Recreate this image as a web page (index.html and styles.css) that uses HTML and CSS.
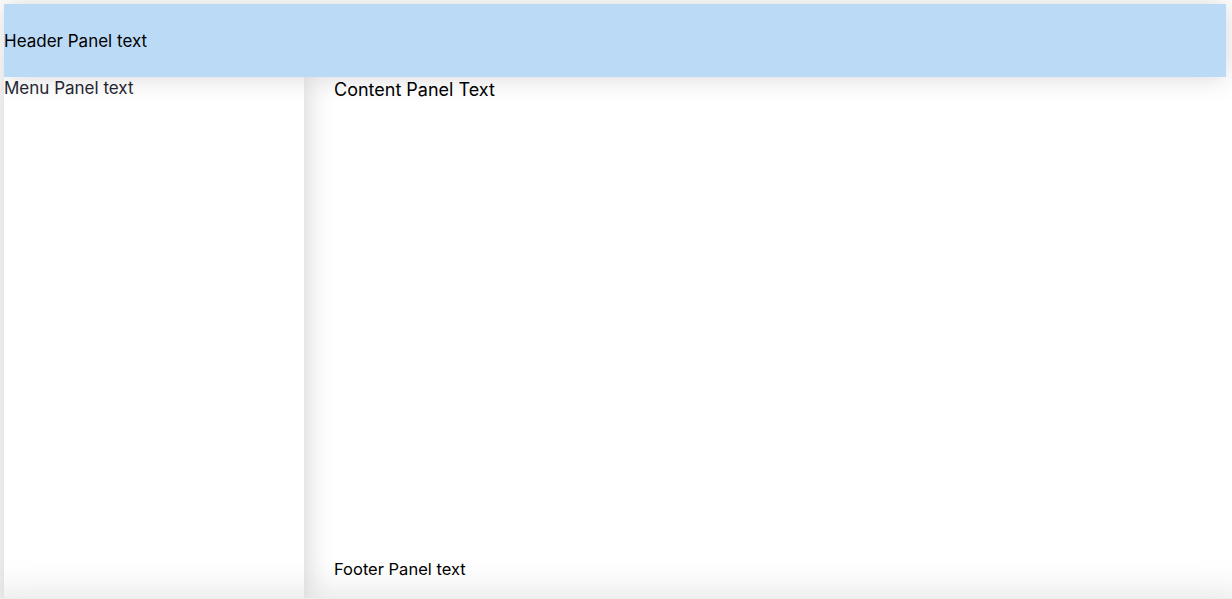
FILE: index.html
```html
<!DOCTYPE html>
<html>
<head>
<meta charset="utf-8">
<link rel="stylesheet" href="styles.css">
</head>
<body>
<div class="page">
  <header class="header">Header Panel text</header>
  <div class="main">
    <nav class="menu">Menu Panel text</nav>
    <section class="content">
      <div class="content-text">Content Panel Text</div>
      <div class="footer">Footer Panel text</div>
    </section>
  </div>
  <div class="below"></div>
</div>
</body>
</html>
```
FILE: styles.css
```css
html, body {
  margin: 0;
  padding: 0;
  height: 100%;
  overflow: hidden;
  background: #ffffff;
}
body {
  font-family: Inter, "Noto Sans", sans-serif;
  color: #000;
}
.page {
  padding: 4px 6px 0 4px;
  display: flex;
  flex-direction: column;
}
.header {
  position: relative;
  z-index: 2;
  height: 73px;
  flex: none;
  background: #bbdaf5;
  display: flex;
  align-items: center;
  font-size: 17px;
  box-shadow: 0 0 28px rgba(0, 0, 0, 0.16);
}
.main {
  display: flex;
  height: 521px;
  flex: none;
}
.menu {
  position: relative;
  z-index: 1;
  width: 300px;
  flex: none;
  background: #fff;
  color: #262633;
  font-size: 17px;
  line-height: 22px;
  box-shadow: 0 0 28px rgba(0, 0, 0, 0.2);
}
.content {
  flex: 1;
  display: flex;
  flex-direction: column;
  justify-content: space-between;
  padding: 1px 30px 19px 30px;
}
.content-text {
  font-size: 18px;
  line-height: 24px;
}
.footer {
  font-size: 16.5px;
  line-height: 20px;
}
.below {
  position: relative;
  z-index: 3;
  flex: none;
  height: 1px;
  margin-left: -4px;
  margin-right: -6px;
  background: #ededed;
  box-shadow: 0 21px 44px 20px rgba(0, 0, 0, 0.14);
}
```
